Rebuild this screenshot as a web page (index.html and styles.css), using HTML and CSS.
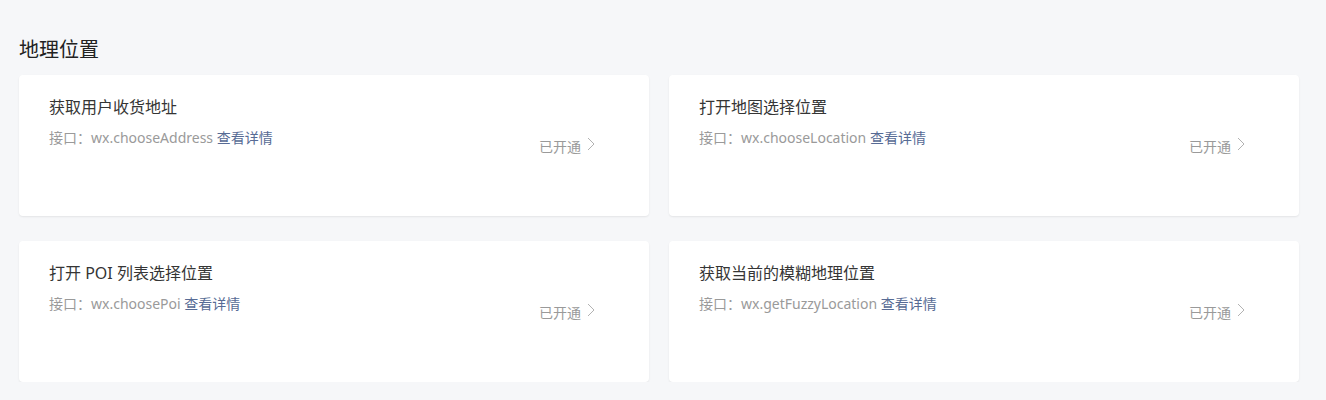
FILE: index.html
```html
<!DOCTYPE html>
<html lang="zh-CN">
<head>
  <meta charset="UTF-8">
  <meta name="viewport" content="width=device-width, initial-scale=1.0">
  <title>地理位置</title>
  <link rel="stylesheet" href="styles.css">
</head>
<body>
  <div class="section">
    <h2 class="section-title">地理位置</h2>

    <div class="cards">
      <div class="card">
        <div class="card-info">
          <div class="card-title">获取用户收货地址</div>
          <div class="card-desc">接口：wx.chooseAddress <a href="#" class="link">查看详情</a></div>
        </div>
        <div class="status">已开通 <svg class="arrow" width="8" height="14" viewBox="0 0 8 14"><polyline points="1,1 7,7 1,13" /></svg></div>
      </div>

      <div class="card">
        <div class="card-info">
          <div class="card-title">打开地图选择位置</div>
          <div class="card-desc">接口：wx.chooseLocation <a href="#" class="link">查看详情</a></div>
        </div>
        <div class="status">已开通 <svg class="arrow" width="8" height="14" viewBox="0 0 8 14"><polyline points="1,1 7,7 1,13" /></svg></div>
      </div>

      <div class="card">
        <div class="card-info">
          <div class="card-title">打开 POI 列表选择位置</div>
          <div class="card-desc">接口：wx.choosePoi <a href="#" class="link">查看详情</a></div>
        </div>
        <div class="status">已开通 <svg class="arrow" width="8" height="14" viewBox="0 0 8 14"><polyline points="1,1 7,7 1,13" /></svg></div>
      </div>

      <div class="card">
        <div class="card-info">
          <div class="card-title">获取当前的模糊地理位置</div>
          <div class="card-desc">接口：wx.getFuzzyLocation <a href="#" class="link">查看详情</a></div>
        </div>
        <div class="status">已开通 <svg class="arrow" width="8" height="14" viewBox="0 0 8 14"><polyline points="1,1 7,7 1,13" /></svg></div>
      </div>
    </div>
  </div>
</body>
</html>
```

FILE: styles.css
```css
* {
  box-sizing: border-box;
}

body {
  margin: 0;
  background: #f6f7f9;
  font-family: "Noto Sans", "Noto Sans CJK SC", sans-serif;
  color: #353535;
}

.section {
  padding: 35px 27px 0 19px;
}

.section-title {
  margin: 0 0 10px;
  font-size: 20px;
  font-weight: normal;
  line-height: 30px;
  color: #222;
}

.cards {
  display: grid;
  grid-template-columns: repeat(2, 1fr);
  column-gap: 20px;
  row-gap: 25px;
}

.card {
  display: flex;
  align-items: center;
  height: 141px;
  padding: 0 54px 0 30px;
  background: #fff;
  border-radius: 4px;
  box-shadow: 0 1px 2px rgba(0, 0, 0, 0.08);
}

.card-info {
  flex: 1;
  align-self: flex-start;
  padding-top: 20px;
}

.card-title {
  font-size: 16px;
  line-height: 24px;
  color: #353535;
}

.card-desc {
  margin-top: 9px;
  font-size: 14px;
  line-height: 20px;
  color: #9a9a9a;
}

.link {
  color: #576b95;
  text-decoration: none;
}

/* 已开通 > */
.status {
  display: flex;
  align-items: center;
  gap: 6px;
  font-size: 14px;
  color: #9a9a9a;
}

.arrow {
  margin-top: -3px;
  fill: none;
  stroke: #b2b2b2;
  stroke-width: 1;
}
```
